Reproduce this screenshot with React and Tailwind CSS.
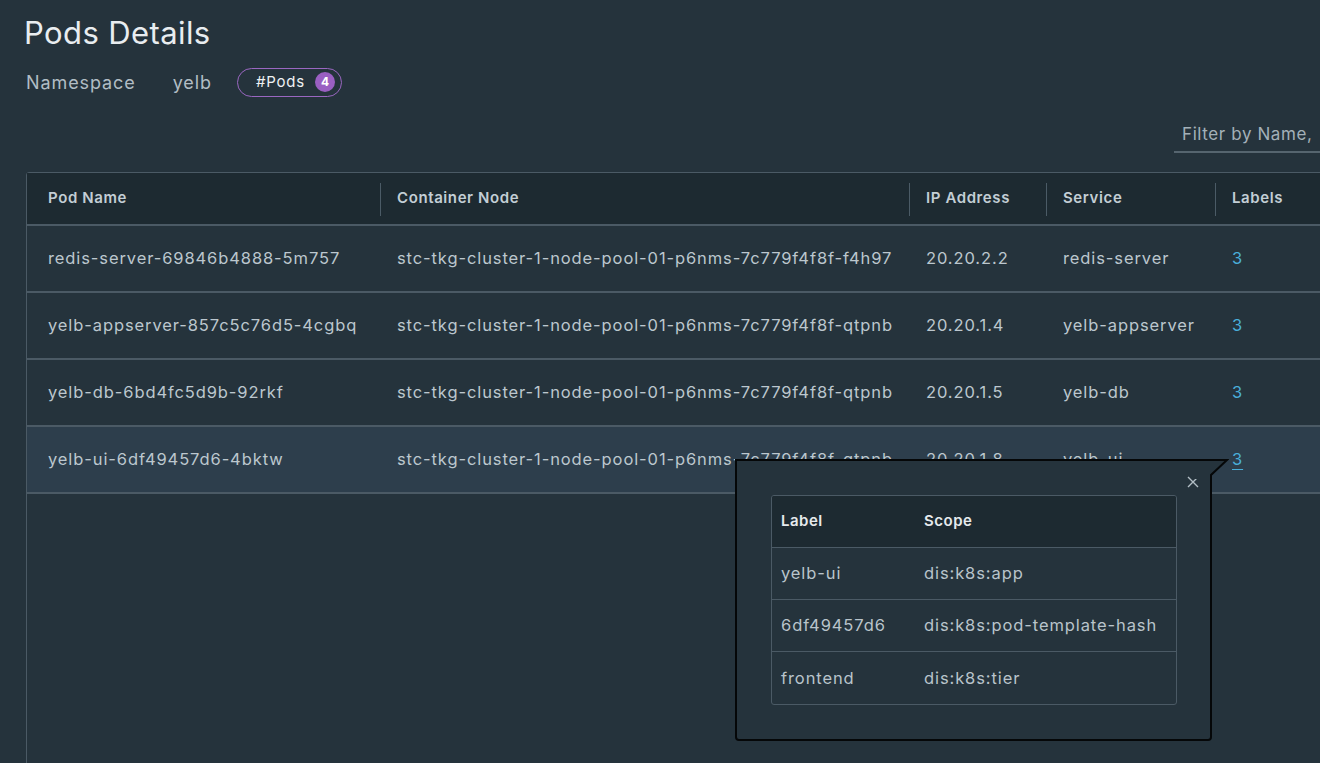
import React from 'react';

const pods = [
    { name: 'redis-server-69846b4888-5m757', node: 'stc-tkg-cluster-1-node-pool-01-p6nms-7c779f4f8f-f4h97', ip: '20.20.2.2', service: 'redis-server', labels: 3 },
    { name: 'yelb-appserver-857c5c76d5-4cgbq', node: 'stc-tkg-cluster-1-node-pool-01-p6nms-7c779f4f8f-qtpnb', ip: '20.20.1.4', service: 'yelb-appserver', labels: 3 },
    { name: 'yelb-db-6bd4fc5d9b-92rkf', node: 'stc-tkg-cluster-1-node-pool-01-p6nms-7c779f4f8f-qtpnb', ip: '20.20.1.5', service: 'yelb-db', labels: 3 },
    { name: 'yelb-ui-6df49457d6-4bktw', node: 'stc-tkg-cluster-1-node-pool-01-p6nms-7c779f4f8f-qtpnb', ip: '20.20.1.8', service: 'yelb-ui', labels: 3, selected: true },
];

const labels = [
    { label: 'yelb-ui', scope: 'dis:k8s:app' },
    { label: '6df49457d6', scope: 'dis:k8s:pod-template-hash' },
    { label: 'frontend', scope: 'dis:k8s:tier' },
];

const cols = 'grid grid-cols-[353px_529px_137px_169px_200px]';

const HeaderCell = ({ children, first }) => (
    <div className="relative flex items-center pl-[17px] text-[15px] font-semibold tracking-[0.6px] text-[#c3ced5]">
        {!first && <span className="absolute left-0 top-[10px] bottom-[8px] w-px bg-[#4b5b66]" />}
        {children}
    </div>
);

const LabelsPopover = () => (
    <div className="absolute left-[735px] top-[459px] z-20">
        <div className="relative w-[477px] h-[282px] border-2 border-[#050708] rounded-b-[4px] bg-[#25333c]">
            <button className="absolute right-[11px] top-[15px] text-[#b3bfc6]" aria-label="Close">
                <svg width="12" height="12" viewBox="0 0 12 12" fill="none" stroke="currentColor" strokeWidth="1.4">
                    <path d="M1 1 L11 11 M11 1 L1 11" />
                </svg>
            </button>
            <div className="absolute left-[34px] top-[34px] w-[406px] border border-[#4b5a65] rounded-[3px] overflow-hidden">
                <div className="grid grid-cols-[144px_1fr] h-[52px] bg-[#1d2a31] border-b border-[#4b5a65] text-[15px] font-semibold tracking-[0.5px] text-[#e6eaed]">
                    <div className="flex items-center pl-[9px]">Label</div>
                    <div className="flex items-center pl-[8px]">Scope</div>
                </div>
                {labels.map((l, i) => (
                    <div key={l.label} className={`grid grid-cols-[144px_1fr] h-[52px] text-[16.5px] tracking-[0.9px] text-[#b9c4cb] ${i < labels.length - 1 ? 'border-b border-[#4b5a65]' : ''}`}>
                        <div className="flex items-center pl-[9px]">{l.label}</div>
                        <div className="flex items-center pl-[8px]">{l.scope}</div>
                    </div>
                ))}
            </div>
        </div>
        {/* tail pointing at the link */}
        <svg className="absolute left-[460px] top-0 z-30" width="34" height="20" viewBox="0 0 34 20">
            <polygon points="0,2 32,1 17,16 15,20 0,20" fill="#25333c" />
            <path d="M0 1 L32 1 L16 16 L16 20" fill="none" stroke="#050708" strokeWidth="2" />
        </svg>
    </div>
);

export default function App() {
    return (
        <div className="relative w-[1320px] h-[763px] overflow-hidden bg-[#25333c]" style={{ fontFamily: 'Inter, "Noto Sans", sans-serif' }}>
            <div className="pl-[24px] pt-[14px]">
                <h1 className="text-[31px] leading-[38px] font-normal text-[#e9edf0] tracking-[0.4px]">Pods Details</h1>
                <div className="flex items-center mt-[15px] pl-[2px] h-[30px] tracking-[0.9px]">
                    <span className="text-[18px] text-[#b1bdc4]">Namespace</span>
                    <span className="ml-[37px] text-[18px] text-[#b1bdc4]">yelb</span>
                    <span className="ml-[25px] flex items-center h-[29px] pl-[18px] pr-[6px] rounded-full border-[1.5px] border-[#9a67c1]">
                        <span className="text-[15px] text-[#eef1f3] tracking-[0.8px]">#Pods</span>
                        <span className="ml-[10px] flex items-center justify-center w-[20px] h-[20px] rounded-full bg-[#9a5fc2] text-[12px] font-bold tracking-normal text-white">4</span>
                    </span>
                </div>
            </div>

            <div className="flex justify-end mt-[27px]">
                <div className="w-[146px] h-[29px] border-b-2 border-[#56656f] pl-[8px] pb-[6px] flex items-center">
                    <span className="text-[17px] text-[#a3b0b8] tracking-[0.6px] whitespace-nowrap">Filter by Name,</span>
                </div>
            </div>

            <div className="ml-[26px] mt-[19px] w-[1400px] h-[600px] border border-[#4b5a65] rounded-tl-[3px]">
                <div className={`${cols} h-[53px] bg-[#1d2a31] border-b-2 border-[#4b5a65]`}>
                    <HeaderCell first>
                        <span className="pl-[4px]">Pod Name</span>
                    </HeaderCell>
                    <HeaderCell>Container Node</HeaderCell>
                    <HeaderCell>IP Address</HeaderCell>
                    <HeaderCell>Service</HeaderCell>
                    <HeaderCell>Labels</HeaderCell>
                </div>
                {pods.map((p) => (
                    <div key={p.name} className={`${cols} h-[67px] border-b-2 border-[#4b5a65] text-[16.5px] tracking-[0.9px] text-[#bcc7ce] ${p.selected ? 'bg-[#2d3e4c]' : ''}`}>
                        <div className="flex items-center pl-[21px] whitespace-nowrap">{p.name}</div>
                        <div className="flex items-center pl-[17px] whitespace-nowrap">{p.node}</div>
                        <div className="flex items-center pl-[17px]">{p.ip}</div>
                        <div className="flex items-center pl-[17px]">{p.service}</div>
                        <div className="flex items-center pl-[17px]">
                            <a className={`text-[#4aaed9] ${p.selected ? 'underline underline-offset-4' : ''}`}>{p.labels}</a>
                        </div>
                    </div>
                ))}
            </div>

            <LabelsPopover />
        </div>
    );
}
